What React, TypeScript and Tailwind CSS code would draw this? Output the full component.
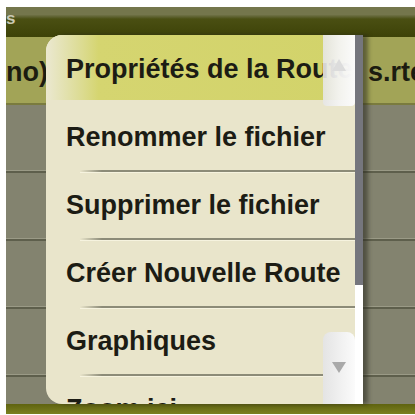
const items = [
  "Propriétés de la Route",
  "Renommer le fichier",
  "Supprimer le fichier",
  "Créer Nouvelle Route",
  "Graphiques",
  "Zoom ici",
];

function GridRow({ last }: { last?: boolean }) {
  return (
    <div
      className={
        last
          ? "h-[27px] bg-[#83836f]"
          : "h-[68px] border-b-2 border-[#5e5f4c] bg-[#83836f] shadow-[inset_0_-1px_0_#9a9a86]"
      }
    />
  );
}

function MenuItem({ label, active, index }: { label: string; active?: boolean; index: number }) {
  return (
    <div className="relative flex h-[68px] shrink-0 items-center">
      {active && (
        <div className="absolute inset-x-0 top-0 h-[65px] bg-gradient-to-r from-[#ebe8d0] via-[#d5d570] via-[17%] to-[#d2d36a]" />
      )}
      <span className="relative whitespace-nowrap pl-[20px] text-[27px] font-bold leading-none text-[#1c1c14]">
        {label}
      </span>
      {!active && index < items.length - 1 && (
        <div className="absolute bottom-[-1px] left-[34px] right-0 h-[2px] bg-gradient-to-r from-[#e9e5cb] via-[#8c8b78] via-[8%] to-[#8c8b78] shadow-[0_1px_0_#f6f3df]" />
      )}
    </div>
  );
}

export default function App() {
  return (
    <div className="relative h-[415px] w-[415px] overflow-hidden bg-white pl-[6px] pt-[7px] font-['Liberation_Sans',Arial,sans-serif]">
      <div className="flex flex-col">
        <header className="flex h-[30px] items-start bg-gradient-to-b from-[#74764c] from-[25%] via-[#4a4f12] via-[40%] to-[#3d4208]">
          <span className="mt-[3px] text-[17px] font-bold leading-none text-[#c9c9b4]">s</span>
        </header>
        <div className="flex h-[68px] items-center border-b-2 border-[#7a7b3e] bg-[#a2a457] text-[27px] font-bold leading-none text-[#1c1c10]">
          <span className="pt-[4px]">no)</span>
          <span className="flex-1" />
          <span className="w-[47px] whitespace-nowrap pt-[4px]">s.rte</span>
        </div>
        <GridRow />
        <GridRow />
        <GridRow />
        <GridRow />
        <GridRow last />
        <div className="h-[10px] bg-gradient-to-b from-[#5f6310] to-[#7b8020]" />
      </div>

      <div className="absolute left-[46px] top-[35px] flex h-[369px] w-[317px] rounded-l-[16px] shadow-[5px_0_4px_rgba(40,40,30,0.55)]">
        <div className="relative flex w-[309px] flex-col overflow-hidden rounded-l-[16px] bg-[#e9e5cb]">
          {items.map((label, i) => (
            <MenuItem key={label} label={label} active={i === 0} index={i} />
          ))}

          <div className="absolute right-0 top-0 flex h-[71px] w-[32px] justify-center rounded-b-[4px] bg-gradient-to-r from-[#e6e6e6]/90 via-[#f4f4f4]/95 to-[#fbfbfb]">
            <svg width="14" height="12" viewBox="0 0 14 12" className="mt-[24px]">
              <polygon points="7,0 14,12 0,12" fill="#dcdcdc" />
            </svg>
          </div>
          <div className="absolute bottom-0 right-0 flex h-[72px] w-[32px] justify-center rounded-t-[8px] bg-gradient-to-r from-[#e4e4e4] to-[#fbfbfb]">
            <svg width="14" height="11" viewBox="0 0 14 11" className="mt-[30px]">
              <polygon points="0,0 14,0 7,11" fill="#a9a9a9" />
            </svg>
          </div>
        </div>
        <div className="flex w-[8px] flex-col bg-white">
          <div className="h-[250px] bg-[#75767d]" />
        </div>
      </div>
    </div>
  );
}
